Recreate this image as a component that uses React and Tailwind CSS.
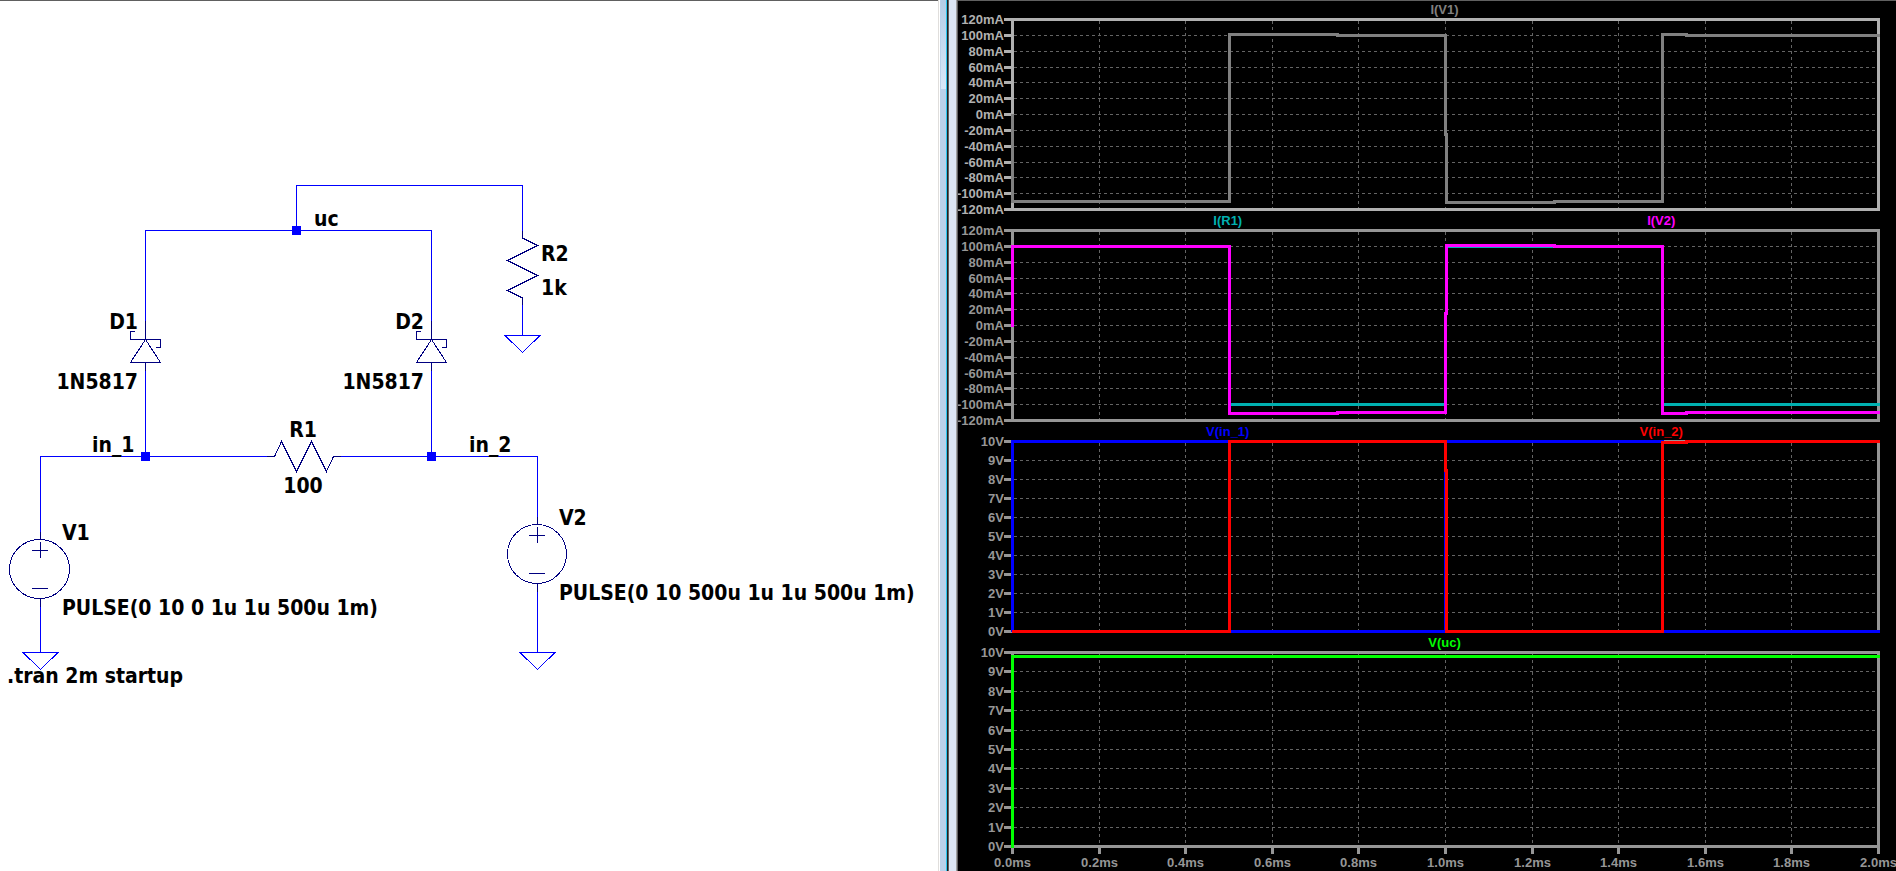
const SCHEMATIC_FONT = '[font-family:"DejaVu_Sans_Condensed","DejaVu_Sans",sans-serif]'

function Node({ x, y }) {
  return <rect x={x - 4} y={y - 4} width="9" height="9" fill="#0000ff" />
}

function Ground({ x, y }) {
  return <path d={`M${x - 17} ${y + 0.5}h35l-17.5 17z`} stroke="#0000ff" />
}

function Diode({ x }) {
  return (
    <g stroke="#000080">
      <path d={`M${x + 0.5} 321V339`} />
      <path d={`M${x - 10} 331.5h-4.5v8h30v8h-4.5`} />
      <path d={`M${x + 0.5} 339.5l-15 23h30z`} />
      <path d={`M${x + 0.5} 363V371`} />
    </g>
  )
}

function Source({ x, y, cx = x, rx = 29.5 }) {
  return (
    <g stroke="#000080">
      <ellipse cx={cx} cy={y} rx={rx} ry="29.5" />
      <path d={`M${x + 0.5} ${y - 37}v8M${x + 0.5} ${y + 30}v8`} />
      <path d={`M${x - 8} ${y - 18.5}h16M${x + 0.5} ${y - 27}v16M${x - 8} ${y + 19.5}h16`} />
    </g>
  )
}

const labels = [
  { x: 314, y: 226, text: 'uc' },
  { x: 92, y: 452, text: 'in_1' },
  { x: 469, y: 452, text: 'in_2' },
  { x: 138, y: 329, text: 'D1', anchor: 'end' },
  { x: 138, y: 389, text: '1N5817', anchor: 'end' },
  { x: 424, y: 329, text: 'D2', anchor: 'end' },
  { x: 424, y: 389, text: '1N5817', anchor: 'end' },
  { x: 303, y: 437, text: 'R1', anchor: 'middle' },
  { x: 303, y: 493, text: '100', anchor: 'middle' },
  { x: 541, y: 261, text: 'R2' },
  { x: 541, y: 295, text: '1k' },
  { x: 62, y: 540, text: 'V1' },
  { x: 62, y: 615, text: 'PULSE(0 10 0 1u 1u 500u 1m)' },
  { x: 559, y: 525, text: 'V2' },
  { x: 559, y: 600, text: 'PULSE(0 10 500u 1u 1u 500u 1m)' },
  { x: 7, y: 683, text: '.tran 2m startup' },
]

function Schematic() {
  return (
    <section aria-label="Schematic" className="border-t border-[#606060] bg-white">
      <svg viewBox="0 1 938 870" className="block h-auto w-full">
        <g fill="none" strokeWidth="1" shapeRendering="crispEdges">
          <g stroke="#0000ff">
            <path d="M296.5 230.5V185.5H522.5V231" />
            <path d="M145.5 321V230.5H431.5V321" />
            <path d="M145.5 371V456.5M431.5 371V456.5" />
            <path d="M40.5 532V456.5H267M341 456.5H537.5V517" />
            <path d="M40.5 606V652.5M537.5 591V652.5M522.5 305V335.5" />
          </g>
          <g stroke="#000080">
            <path d="M267 456.5H274.5L281.5 441.5L296.5 471.5L311.5 441.5L326.5 471.5L333.5 456.5H341" />
            <path d="M522.5 231V238L537.5 245.5L507.5 260.5L537.5 275.5L507.5 290.5L522.5 298V305" />
          </g>
          <Diode x={145} />
          <Diode x={431} />
          <Source x={40} y={569} cx={39.5} rx={30} />
          <Source x={537} y={554} />
          <Ground x={40} y={652} />
          <Ground x={537} y={652} />
          <Ground x={522} y={335} />
          <Node x={296} y={230} />
          <Node x={145} y={456} />
          <Node x={431} y={456} />
        </g>
        <g className={`${SCHEMATIC_FONT} text-[21px] font-bold`} fill="#000000">
          {labels.map((l) => (
            <text key={`${l.x}-${l.y}`} x={l.x} y={l.y} textAnchor={l.anchor ?? 'start'}>
              {l.text}
            </text>
          ))}
        </g>
      </svg>
    </section>
  )
}

function Divider() {
  return (
    <div aria-hidden="true" className="flex">
      <div className="w-px bg-[#e0dedc]" />
      <div className="w-px bg-white" />
      <div className="flex w-[6px] flex-col bg-[#b9d1ea]">
        <div className="ml-px h-[89px] bg-linear-to-b from-[#b4cde6] to-[#d8e8f8]" />
      </div>
      <div className="w-px bg-[#28c8f0]" />
      <div className="w-px bg-[#202020]" />
      <div className="w-px bg-[#606060]" />
      <div className="w-[7px] bg-[#dce6f4]" />
      <div className="w-px bg-[#a0a0a0]" />
      <div className="w-px bg-[#606060]" />
    </div>
  )
}

const LEFT = 54
const WIDTH = 866
const currentTicks = ['120mA', '100mA', '80mA', '60mA', '40mA', '20mA', '0mA', '-20mA', '-40mA', '-60mA', '-80mA', '-100mA', '-120mA']
const voltTicks = ['10V', '9V', '8V', '7V', '6V', '5V', '4V', '3V', '2V', '1V', '0V']
const timeTicks = ['0.0ms', '0.2ms', '0.4ms', '0.6ms', '0.8ms', '1.0ms', '1.2ms', '1.4ms', '1.6ms', '1.8ms', '2.0ms']

const plots = [
  {
    ticks: currentTicks,
    axis: '#b0b0b0',
    height: 190,
    traces: [
      {
        name: 'I(V1)',
        color: '#808080',
        d: 'M54.5 96V183.5H271.5V16.5H379V17.5H487.5V116H488.5V184.5H596V183.5H704.5V16.5H728V17.5H922',
      },
    ],
  },
  {
    ticks: currentTicks,
    axis: '#969696',
    height: 190,
    traces: [
      { name: 'I(R1)', color: '#00b0b0', d: 'M54.5 97V17.5H271.5V175.5H487.5V84H488.5V17.5H704.5V175.5H922' },
      {
        name: 'I(V2)',
        color: '#ff00ff',
        d: 'M54.5 98V17.5H271.5V184.5H379V183.5H487.5V84H488.5V16.5H596V17.5H704.5V184.5H728V183.5H922',
      },
    ],
  },
  {
    ticks: voltTicks,
    axis: '#969696',
    height: 190,
    traces: [
      { name: 'V(in_1)', color: '#0000ff', d: 'M54.5 192V1.5H271.5V191.5H487.5V1.5H704.5V191.5H922' },
      { name: 'V(in_2)', color: '#ff0000', d: 'M54 191.5H271.5V1.5H487.5V30H488.5V191.5H704.5V2.5H728V1.5H922' },
    ],
  },
  {
    ticks: voltTicks,
    axis: '#969696',
    height: 194,
    times: timeTicks,
    traces: [{ name: 'V(uc)', color: '#00ff00', d: 'M54.5 197V5.5H922' }],
  },
]

function Plot({ plot }) {
  const { ticks, axis, height, times, traces } = plot
  // Tick positions snap to whole pixels so the 1px grid lines stay crisp.
  const ys = ticks.map((_, i) => Math.round((height * i) / (ticks.length - 1)) + 1.5)
  const xs = timeTicks.map((_, i) => LEFT + Math.round((WIDTH * i) / 10) + 0.5)
  const bottom = height + 1.5
  return (
    <figure>
      <figcaption className="flex h-[17px] pr-[18px] pl-[53px] text-center leading-[17px]">
        {traces.map((t) => (
          <span key={t.name} className="flex-1" style={{ color: t.color }}>
            {t.name}
          </span>
        ))}
      </figcaption>
      <svg viewBox={`0 0 938 ${times ? 220 : 194}`} className="block h-auto w-full overflow-visible">
        <g fill="none" shapeRendering="crispEdges">
          <g stroke="#646464" strokeWidth="1" strokeDasharray="3 3">
            {ys.slice(1, -1).map((y) => (
              <path key={y} d={`M${LEFT + 2} ${y}H920`} />
            ))}
            {xs.slice(1, -1).map((x) => (
              <path key={x} d={`M${x} 3V${bottom}`} />
            ))}
          </g>
          <g stroke={axis} strokeWidth="3">
            <path d={`M46 1.5H922M46 ${bottom}H922M54.5 0V${bottom}M920.5 0V${bottom}`} />
            {ys.map((y) => (
              <path key={y} d={`M46 ${y}H54`} />
            ))}
            {times && xs.map((x) => <path key={x} d={`M${x} ${bottom}V${bottom + 7}`} />)}
          </g>
          {traces.map((t) => (
            <path key={t.name} d={t.d} stroke={t.color} strokeWidth="3" />
          ))}
        </g>
        <g fill={axis}>
          {ys.map((y, i) => (
            <text key={y} x="46" y={y + 4.5} textAnchor="end">
              {ticks[i]}
            </text>
          ))}
          {times &&
            xs.map((x, i) => (
              <text key={x} x={x} y="216" textAnchor="middle">
                {times[i]}
              </text>
            ))}
        </g>
      </svg>
    </figure>
  )
}

export default function App() {
  return (
    <main className="grid min-h-screen grid-cols-[minmax(0,1fr)_20px_minmax(0,1fr)] overflow-hidden bg-white">
      <Schematic />
      <Divider />
      <section
        aria-label="Waveforms"
        className='overflow-hidden border-t border-[#606060] bg-black [font-family:"Liberation_Sans",Arial,sans-serif] text-[13px] font-bold'
      >
        {plots.map((plot, i) => (
          <Plot key={i} plot={plot} />
        ))}
      </section>
    </main>
  )
}
